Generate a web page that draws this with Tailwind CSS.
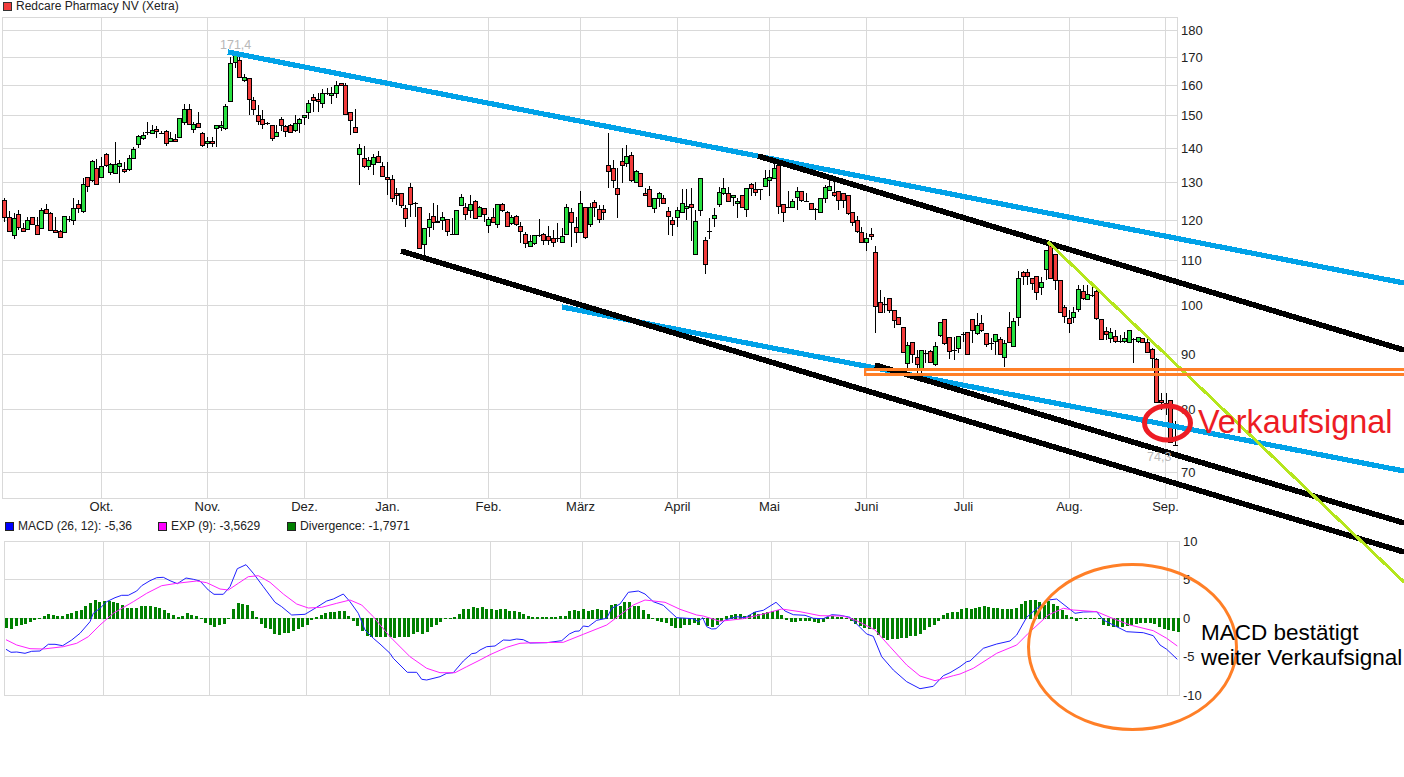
<!DOCTYPE html>
<html lang="de">
<head>
    <meta charset="UTF-8">
    <meta name="viewport" content="width=device-width, initial-scale=1.0">
    <title>Redcare Pharmacy NV (Xetra)</title>
    <script src="https://cdn.jsdelivr.net/npm/@tailwindcss/browser@4"></script>
</head>
<body class="bg-white overflow-hidden font-['Liberation_Sans',sans-serif] text-[#222]">
<div class="relative w-[1404px] h-[777px] overflow-hidden">

    <div class="flex items-center gap-[4px] h-[17px] pl-[3px] pb-[5px] text-[12px] leading-none">
        <span class="w-[9px] h-[9px] bg-[#f23c3c] border border-[#333]"></span>
        <span>Redcare Pharmacy NV (Xetra)</span>
    </div>

    <!-- Kurschart -->
    <svg id="main" class="block w-[1404px] h-[501px] text-[13px]" viewBox="0 17 1404 501"></svg>

    <div class="flex items-center h-[16px] pl-[5px] text-[12px] leading-none">
        <span class="w-[9px] h-[9px] bg-[#0000ff] border border-[#222] mr-[4px]"></span>
        <span class="w-[140px]">MACD (26, 12): -5,36</span>
        <span class="w-[9px] h-[9px] bg-[#ff00ff] border border-[#222] mr-[4px]"></span>
        <span class="w-[116px]">EXP (9): -3,5629</span>
        <span class="w-[9px] h-[9px] bg-[#008000] border border-[#222] mr-[4px]"></span>
        <span class="text-[12.2px]">Divergence: -1,7971</span>
    </div>

    <!-- MACD -->
    <svg id="macd" class="block w-[1404px] h-[176px] text-[13px]" viewBox="0 534 1404 176"></svg>

    <!-- Eingezeichnete Linien und Notizen -->
    <svg class="absolute inset-0 w-[1404px] h-[777px]" viewBox="0 0 1404 777" fill="none">
        <g shape-rendering="crispEdges">
            <line x1="228" y1="52" x2="1404" y2="283" stroke="#00a2e8" stroke-width="5.2"/>
            <line x1="562" y1="307" x2="1404" y2="471" stroke="#00a2e8" stroke-width="5.2"/>
            <line x1="758" y1="156" x2="1404" y2="350" stroke="#000" stroke-width="5.6"/>
            <line x1="401" y1="251" x2="1404" y2="552" stroke="#000" stroke-width="5.6"/>
            <line x1="875" y1="365" x2="1404" y2="523" stroke="#000" stroke-width="5.6"/>
            <line x1="1048" y1="242" x2="1404" y2="582" stroke="#b5e61d" stroke-width="3"/>
            <rect x="865" y="369.5" width="560" height="5" stroke="#ff7f27" stroke-width="2.5"/>
        </g>
        <ellipse cx="1167.5" cy="423" rx="23" ry="17" stroke="#ed1c24" stroke-width="5"/>
        <ellipse cx="1132.5" cy="647" rx="104" ry="82.5" stroke="#ff7f27" stroke-width="3"/>
        <text x="220" y="49" fill="#b8b8b8" font-size="12.5">171,4</text>
        <text x="1147" y="461" fill="#b8b8b8" font-size="12.5">74,3</text>
        <text x="1198" y="433" fill="#ed1c24" font-size="32.4">Verkaufsignal</text>
        <text x="1201" y="640" fill="#000" font-size="22.5">MACD bestätigt</text>
        <text x="1201" y="665" fill="#000" font-size="22.5">weiter Verkaufsignal</text>
    </svg>
</div>

<script>
    const GRID = '#d9d9d9';
    const RED = '#f23c3c', GREEN = '#28e040';

    // x, Body oben, Body unten, Docht oben, Docht unten, Farbe (0 rot, 1 gruen, 2 doji)
    // Werte 3-fach wie abgelesen, je Abschnitt mit eigenem Ursprung
    const candles = [
        { ox: 0, oy: 0, rows: [
            [13,601,650,595,665,0],[28,650,694,633,697,0],[43,653,704,640,718,1],[55,643,680,630,690,0],
            [70,685,692,670,697,0],[82,660,686,650,690,1],[97,652,673,650,675,0],[112,676,701,650,705,0],
            [124,631,683,625,685,1],[139,628,638,612,640,0],[151,640,689,635,692,0],[166,691,697,650,700,0],
            [181,694,710,690,710,0],[193,649,697,649,697,1],[208,658,658,648,665,2],[220,625,661,595,675,1],
            [235,613,623,600,640,0],[250,553,632,535,638,1],[262,532,559,530,575,0],[277,484,541,480,545,1],
            [289,505,553,478,555,0],[304,497,532,470,535,1],[319,462,496,458,500,0],[331,493,517,490,525,1],
            [346,493,520,427,522,1],[358,490,499,480,550,1],[373,508,514,487,518,0],[388,475,508,465,512,1],
            [400,448,473,440,475,1],[415,408,433,405,445,1],[430,406,415,395,420,1],[442,396,396,365,405,2],
            [457,389,400,375,402,1],[469,386,394,378,415,0],[484,398,398,392,402,2],[499,394,430,390,438,0],
            [511,415,424,395,425,1],[526,418,424,402,425,0],[538,355,412,355,415,1],[553,328,367,312,375,1],
            [568,328,373,312,375,0],[580,371,388,365,400,1],[595,370,382,337,384,0],[607,400,436,395,440,0],
            [622,424,430,410,445,1],[637,424,430,410,440,0],[649,376,385,375,440,1],[664,376,382,362,392,1],
            [676,319,385,312,390,1],[691,190,302,170,305,1],[706,165,187,160,205,1],[718,181,232,170,235,0],
            [733,232,241,222,245,1],[748,235,298,235,345,0],[760,301,328,292,345,0],[775,344,364,315,375,0],
            [787,358,373,330,388,0],[802,368,368,365,375,2],[817,376,415,376,422,0],[829,397,409,375,412,1],
            [844,358,376,352,392,0],[856,379,394,375,410,0],[871,376,397,372,400,0],[886,370,391,345,395,1],
            [898,358,370,355,400,1],[913,346,352,345,375,1],[925,310,337,300,358,1],[940,292,301,283,335,0],
            [955,298,304,280,335,0],[967,278,310,268,325,1],[982,278,278,265,285,2],[994,278,286,262,312,1],
            [1009,256,280,243,295,1],[1024,250,256,248,255,0],[1036,256,343,250,345,0],[1051,337,361,335,405,0],
            [1066,382,397,327,397,0],[1078,445,463,432,555,1],[1093,475,497,437,505,0],[1105,481,499,470,510,1],
            [1120,470,493,462,525,1],[1135,469,487,453,490,0],[1147,499,529,485,530,0]
        ]},
        { ox: 380, oy: 120, rows: [
            [22,170,176,125,225,0],[35,178,235,165,245,0],[49,220,226,205,255,0],[64,220,256,220,265,0],
            [76,265,295,255,320,0],[91,202,253,190,290,0],[104,248,248,245,290,2],[118,262,385,262,385,0],
            [133,325,373,325,405,1],[146,298,322,280,350,1],[160,289,305,250,330,0],[172,303,307,255,310,0],
            [187,292,300,275,330,1],[202,298,334,298,347,0],[215,343,343,295,345,2],[229,271,343,271,345,1],
            [242,232,256,222,258,1],[256,260,283,250,300,0],[271,251,270,225,295,1],[284,244,295,240,297,0],
            [298,262,289,258,292,1],[313,265,283,265,305,0],[325,298,316,290,338,1],[340,292,307,265,308,0],
            [352,253,312,253,325,1],[367,253,271,248,275,0],[382,277,319,272,322,0],[394,292,310,285,315,1],
            [409,289,313,285,318,0],[421,319,334,305,370,0],[436,343,370,335,385,0],[451,362,379,345,382,1],
            [463,346,370,345,375,1],[478,345,345,298,350,2],[490,343,361,340,375,0],[505,349,361,317,375,0],
            [520,355,367,330,380,0],[532,355,355,310,365,2],[547,349,367,325,370,1],[559,262,343,253,345,1],
            [574,277,307,265,380,0],[589,322,337,290,370,0],[601,250,337,213,340,1],[616,262,352,262,358,0],
            [631,262,313,250,320,1],[643,247,262,240,290,0],[658,268,298,255,310,0],[670,268,277,255,300,0],
            [685,136,154,40,205,0],[700,145,181,120,205,0],[712,205,223,145,293,0],[727,124,136,85,190,0],
            [739,109,130,75,140,1],[754,106,181,97,185,0],[769,154,187,150,190,1],[781,160,199,160,200,0],
            [796,220,226,205,228,0],[808,208,259,197,262,0],[823,235,265,235,278,1],[838,220,235,215,262,1],
            [850,235,250,225,252,0],[865,274,289,262,345,0],[877,301,313,290,347,0],[892,271,292,262,320,1],
            [907,250,277,208,280,1],[919,259,265,208,300,1],[934,253,262,205,362,0],[946,304,403,270,405,1],
            [961,175,271,175,287,1],[976,361,433,350,462,0],[988,332,332,295,357,2],[1003,286,295,265,320,1],
            [1018,217,253,200,260,1],[1030,205,220,175,225,1],[1045,220,244,200,246,0],[1060,226,232,225,258,1],
            [1072,244,250,235,293,1],[1087,226,262,225,265,0],[1099,205,268,205,290,1],[1114,193,205,190,228,0],
            [1126,208,217,185,228,0],[1141,208,208,208,240,2],[1156,175,199,150,200,1],[1168,172,180,150,228,1],
            [1183,145,175,130,178,1],[1195,135,259,120,282,0]
        ]},
        { ox: 760, oy: 150, rows: [
            [70,163,187,163,215,0],[85,172,172,122,175,2],[97,154,172,148,175,1],[112,124,142,112,180,1],
            [124,124,151,122,155,0],[139,153,153,130,155,2],[154,160,178,160,180,0],[166,178,178,175,210,2],
            [181,145,187,145,190,1],[196,112,145,105,160,1],[208,109,121,85,123,1],[223,127,136,95,140,0],
            [235,124,151,124,180,0],[250,130,151,130,175,0],[265,136,190,136,195,0],[277,187,217,187,228,0],
            [292,211,244,198,248,0],[304,247,277,230,280,0],[319,265,277,250,303,1],[334,253,259,235,270,0],
            [346,307,469,289,548,0],[361,457,487,420,490,0],[373,463,463,440,490,2],[388,445,481,445,490,0],
            [403,481,511,480,535,0],[415,502,523,502,525,0],[430,532,607,532,610,0],[442,584,640,575,660,1],
            [457,577,613,577,640,0],[472,622,643,600,670,0],[484,601,660,601,670,1],[496,610,610,600,640,2],
            [511,604,637,600,640,0],[526,589,643,575,648,1],[541,517,556,517,560,1],[553,508,580,508,585,0],
            [568,562,604,562,628,0],[583,600,600,560,630,2],[595,559,595,559,610,1],[610,552,552,545,575,2],
            [622,547,613,547,613,0],[637,508,541,508,580,0],[652,526,550,490,555,1],[664,520,541,495,545,0],
            [679,550,583,550,590,0],[694,580,580,565,600,2],[706,553,574,553,615,1],[721,568,613,560,615,0],
            [733,580,622,570,650,1],[748,532,577,485,580,0],[760,514,589,505,590,1],[775,385,502,362,527,1],
            [790,367,379,362,405,0],[802,367,379,358,405,0],[817,385,400,385,420,0],[829,379,427,379,450,0],
            [844,397,412,380,435,1],[859,301,358,301,390,1],[871,283,385,280,388,0],[886,313,391,313,420,0],
            [901,391,487,391,490,0],[913,472,499,465,520,0],[928,505,520,480,548,0],[940,487,502,472,520,1],
            [955,418,478,405,485,1],[970,424,445,405,450,0],[982,433,448,405,450,1],[997,435,435,395,440,2],
            [1009,424,505,420,510,0],[1024,508,568,508,570,0],[1039,544,553,532,570,0],[1051,547,565,535,578,1],
            [1066,559,574,540,578,0],[1081,572,572,555,578,2],[1093,565,574,545,578,1],[1108,541,577,541,580,1],
            [1120,568,568,565,640,2],[1135,562,574,560,578,1],[1147,565,577,565,580,0],[1162,577,607,565,610,0],
            [1177,598,625,595,655,0]
        ]},
        { ox: 1050, oy: 340, rows: [
            [318,58,185,55,185,0],[333,180,186,160,210,0],[347,188,188,160,225,2],[361,180,305,180,305,0],
            [376,315,315,243,315,2]
        ]}
    ];

    // Divergenz: x, Wert (3-fach), abgelesen je Abschnitt
    const bars = [
        { ox: 0, rows: [19,-30,33,-33,48,-23,62,-20,76,-17,89,-12,103,-7,117,-3,131,7,145,12,158,9,172,6,186,6,200,12,214,14,228,20,242,24,256,37,270,44,284,54,298,49,312,50,326,50,338,47,352,44,366,38,380,30,394,30,408,30,422,36,436,36,450,36,464,32,477,29,491,24,505,14,519,8,533,3,547,5,560,14,574,9,588,5,602,1,616,-15,630,-20,643,-27,657,-22,671,-18,685,-3,699,27,713,44,727,42,740,38,755,20,768,3,782,-17,796,-29,810,-33,823,-48,837,-50,851,-45,865,-44,879,-40,893,-32,906,-27,920,-20,934,-7,948,3,962,9,976,14,990,18,1003,18,1017,21,1031,20,1045,7,1058,-10,1072,-24,1086,-38,1100,-54,1114,-57,1128,-57,1141,-57,1155,-57,1169,-58,1183,-60,1197,-57,1211,-57,1225,-56,1238,-47,1252,-43,1266,-47,1280,-42,1294,-28,1308,-20,1321,-13,1335,-3,1349,1,1363,3,1377,12,1390,27,1404,27,1418,32,1432,30] },
        { ox: 480, rows: [5,32,19,28,33,26,47,23,60,26,74,26,88,20,102,20,116,17,129,11,143,5,157,2,171,2,185,2,199,2,212,2,226,2,240,6,254,6,267,21,281,24,295,20,309,27,323,20,337,25,350,27,364,23,378,24,392,39,406,42,420,36,433,47,447,49,461,35,475,36,489,24,503,12,516,1,530,-8,544,-11,558,-14,572,-25,586,-30,599,-29,613,-22,627,-20,641,-16,655,-20,669,-2,682,-25,696,-27,710,-20,724,-8,738,6,752,9,765,12,779,12,793,5,807,10,821,17,835,12,848,14,862,19,876,21,890,24,904,10,918,-5,932,-12,946,-12,960,-8,974,-8,987,-8,1001,-12,1015,-15,1029,-11,1042,3,1056,5,1070,3,1084,2,1098,1,1112,-10,1125,-17,1139,-25,1153,-30,1167,-33,1181,-33,1195,-50,1208,-60,1222,-65,1236,-63,1250,-63,1264,-60,1277,-60,1291,-55,1305,-53,1319,-47,1333,-37,1347,-27,1361,-21,1375,-9,1389,8,1402,15,1416,17,1430,17] },
        { ox: 960, rows: [4,27,18,29,32,27,46,30,58,33,72,37,85,33,99,30,112,30,126,26,140,26,154,26,168,30,182,43,196,50,210,54,224,54,237,47,251,38,265,50,278,42,292,35,305,25,319,10,333,3,347,-9,361,-3,375,-2,389,-1,403,-1,416,-3,430,-20,444,-23,458,-26,472,-27,486,-26,500,-23,514,-22,528,-18,541,-15,555,-15,569,-15,583,-17,597,-27,611,-34,625,-36,639,-38,653,-41] }
    ];

    const macdLine = [
        { ox: 0, oy: 490, pts: [18,478,33,487,50,486,75,490,95,484,120,483,145,463,165,463,188,467,215,450,240,430,270,395,280,370,300,355,320,335,345,323,365,316,385,316,410,303,425,287,450,272,470,263,490,262,510,272,532,281,558,264,580,268,600,273,625,300,642,313,670,313,690,290,712,236,738,224,760,250,790,290,825,337,845,350,875,375,915,373,945,355,980,333,1000,327,1030,312,1050,335,1075,370,1095,420,1120,445,1140,462,1170,490,1180,505,1222,547,1250,547,1265,568,1280,570,1320,560,1340,550,1360,548,1390,513,1415,491,1428,489] },
        { ox: 480, oy: 530, pts: [0,360,20,350,45,348,70,330,90,331,110,327,130,329,150,339,200,338,245,332,268,312,285,304,298,303,310,288,325,290,350,271,380,265,395,235,420,222,445,187,475,183,495,192,520,215,550,226,590,263,640,266,655,275,668,263,680,290,695,297,708,296,735,270,770,260,795,263,825,246,850,241,888,217,915,243,940,254,975,256,1000,265,1030,266,1055,254,1080,256,1110,262,1140,292,1160,312,1180,319,1205,380,1240,420,1280,455,1320,476,1360,469,1390,437,1410,428] },
        { ox: 960, oy: 540, pts: [0,380,20,365,30,363,70,325,110,312,150,303,170,285,200,232,225,210,265,180,290,177,345,220,370,216,410,215,430,240,500,275,550,278,580,287,600,315,620,328,652,358] }
    ];
    const expLine = [
        { ox: 0, oy: 490, pts: [18,449,50,465,90,476,130,477,190,470,230,460,265,440,300,405,340,370,400,335,440,310,485,287,530,280,590,273,620,278,660,297,685,300,715,280,745,260,775,257,810,277,850,312,890,342,925,354,965,352,1010,340,1050,330,1085,345,1120,380,1170,440,1230,500,1280,535,1320,548,1365,548,1400,530] },
        { ox: 480, oy: 530, pts: [0,390,30,374,80,352,120,340,160,338,250,337,310,313,380,285,420,255,460,225,495,210,555,217,600,238,650,255,670,258,720,274,790,266,850,252,905,237,960,245,1020,257,1090,258,1130,272,1185,300,1230,350,1280,405,1320,438,1365,452,1420,437] },
        { ox: 960, oy: 540, pts: [0,402,40,385,110,340,170,315,205,280,265,225,310,205,340,210,410,215,450,232,510,255,580,272,620,295,652,318] }
    ];

    function hv(x1, y1, x2, y2) {
        return `<line x1="${x1}" y1="${y1}" x2="${x2}" y2="${y2}" stroke="${GRID}"/>`;
    }

    function linePath(segs) {
        const out = [];
        segs.forEach(s => {
            for (let i = 0; i < s.pts.length; i += 2) {
                out.push((s.ox + s.pts[i] / 3).toFixed(1) + ',' + (s.oy + s.pts[i + 1] / 3).toFixed(1));
            }
        });
        return out.join(' ');
    }

    // Hauptchart
    let main = '';
    [[30.5,180],[57.5,170],[85.5,160],[115.5,150],[148.5,140],[182.5,130],[220.5,120],[260.5,110],[305.5,100],[354.5,90],[409.5,80],[472.5,70]].forEach(r => {
        main += hv(2.5, r[0], 1177.5, r[0]);
        main += `<text x="1181" y="${r[0] + 4.5}" fill="#222">${r[1]}</text>`;
    });
    [[101.5,'Okt.'],[207.5,'Nov.'],[304.5,'Dez.'],[387.5,'Jan.'],[488.5,'Feb.'],[580.5,'März'],[677.5,'April'],[769.5,'Mai'],[866.5,'Juni'],[963.5,'Juli'],[1069.5,'Aug.'],[1165.5,'Sep.']].forEach(r => {
        main += hv(r[0], 17.5, r[0], 498.5);
        main += `<text x="${r[0]}" y="511" text-anchor="middle" fill="#222">${r[1]}</text>`;
    });
    main += `<rect x="2.5" y="17.5" width="1175" height="481" fill="none" stroke="${GRID}"/>`;

    main += '<g shape-rendering="crispEdges">';
    candles.forEach(seg => {
        seg.rows.forEach(c => {
            const x = Math.round(seg.ox + c[0] / 3);
            const t = Math.round(seg.oy + c[1] / 3), b = Math.round(seg.oy + c[2] / 3);
            const wt = Math.round(seg.oy + c[3] / 3), wb = Math.round(seg.oy + c[4] / 3);
            main += `<line x1="${x + .5}" y1="${wt}" x2="${x + .5}" y2="${wb}" stroke="#000"/>`;
            if (c[5] == 2) {
                main += `<line x1="${x - 2}" y1="${t + .5}" x2="${x + 3}" y2="${t + .5}" stroke="#000"/>`;
            } else {
                main += `<rect x="${x - 1.5}" y="${t + .5}" width="4" height="${Math.max(b - t, 1)}" fill="${c[5] ? GREEN : RED}" stroke="#000"/>`;
            }
        });
    });
    main += '</g>';
    document.getElementById('main').innerHTML = main;

    // MACD
    let macd = '';
    [[541,'10'],[579,'5'],[618,'0'],[656,'-5'],[695,'-10']].forEach(r => {
        macd += hv(4.5, r[0] + .5, 1179.5, r[0] + .5);
        macd += `<text x="1183" y="${r[0] + 5}" fill="#222">${r[1]}</text>`;
    });
    [103.5,209.5,306.5,389.5,490.5,582.5,679.5,771.5,868.5,965.5,1071.5,1167.5].forEach(x => {
        macd += hv(x, 541, x, 696);
    });
    macd += `<rect x="4.5" y="541.5" width="1175" height="154" fill="none" stroke="${GRID}"/>`;

    macd += '<g shape-rendering="crispEdges" fill="#008000">';
    bars.forEach(seg => {
        for (let i = 0; i < seg.rows.length; i += 2) {
            const x = Math.round(seg.ox + seg.rows[i] / 3) - 1;
            const v = Math.round(seg.rows[i + 1] / 3);
            if (v >= 0) macd += `<rect x="${x}" y="${618 - v}" width="3" height="${v + 1}"/>`;
            else macd += `<rect x="${x}" y="618" width="3" height="${-v}"/>`;
        }
    });
    macd += '</g>';
    macd += `<polyline points="${linePath(macdLine)}" fill="none" stroke="#1f1fff" stroke-width="1"/>`;
    macd += `<polyline points="${linePath(expLine)}" fill="none" stroke="#ff22ff" stroke-width="1"/>`;
    document.getElementById('macd').innerHTML = macd;
</script>
</body>
</html>
